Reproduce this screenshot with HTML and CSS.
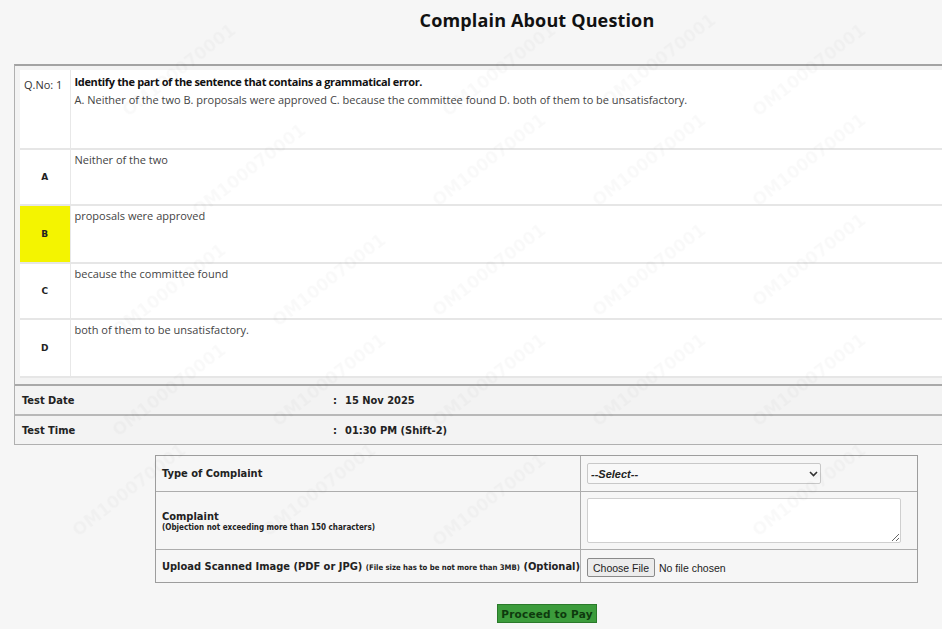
FILE: index.html
```html
<!DOCTYPE html>
<html lang="en">
<head>
<meta charset="utf-8">
<title>Complain About Question</title>
<link rel="stylesheet" href="styles.css">
</head>
<body>
<div class="page">
  <h1 class="title">Complain About Question</h1>

  <div class="qbox">
    <table class="qtable">
      <tr class="qrow">
        <td class="qno">Q.No: 1</td>
        <td class="qtext">
          <div class="qhead">Identify the part of the sentence that contains a grammatical error.</div>
          <div class="qbody">A. Neither of the two B. proposals were approved C. because the committee found D. both of them to be unsatisfactory.</div>
        </td>
      </tr>
      <tr class="opt opt-a">
        <td class="lbl">A</td>
        <td class="otext">Neither of the two</td>
      </tr>
      <tr class="opt opt-b">
        <td class="lbl lbl-sel">B</td>
        <td class="otext">proposals were approved</td>
      </tr>
      <tr class="opt opt-c">
        <td class="lbl">C</td>
        <td class="otext">because the committee found</td>
      </tr>
      <tr class="opt opt-d">
        <td class="lbl">D</td>
        <td class="otext">both of them to be unsatisfactory.</td>
      </tr>
    </table>

    <div class="info">
      <div class="info-row">
        <span class="info-key">Test Date</span>
        <span class="info-colon">:</span>
        <span class="info-val">15 Nov 2025</span>
      </div>
      <div class="info-row">
        <span class="info-key">Test Time</span>
        <span class="info-colon">:</span>
        <span class="info-val">01:30 PM (Shift-2)</span>
      </div>
    </div>
  </div>

  <table class="form">
    <tr class="frow frow-type">
      <td class="flabel">Type of Complaint</td>
      <td class="finput">
        <div class="select-wrap">
          <select class="select">
            <option>--Select--</option>
          </select>
          <svg class="chev" width="9" height="6" viewBox="0 0 9 6"><path d="M1 1 L4.5 4.5 L8 1" fill="none" stroke="#333" stroke-width="1.6"/></svg>
        </div>
      </td>
    </tr>
    <tr class="frow frow-complaint">
      <td class="flabel">Complaint<div class="fnote">(Objection not exceeding more than 150 characters)</div></td>
      <td class="finput"><textarea class="area"></textarea></td>
    </tr>
    <tr class="frow frow-upload">
      <td class="flabel">Upload Scanned Image (PDF or JPG) <span class="fsmall">(File size has to be not more than 3MB)</span> (Optional)</td>
      <td class="finput"><input class="file" type="file"></td>
    </tr>
  </table>

  <div class="actions">
    <button class="pay" type="button">Proceed to Pay</button>
  </div>

  <div class="watermarks" aria-hidden="true">
    <span class="wm" style="left:110px;top:60px">OM100070001</span>
    <span class="wm" style="left:430px;top:60px">OM100070001</span>
    <span class="wm" style="left:590px;top:50px">OM100070001</span>
    <span class="wm" style="left:740px;top:60px">OM100070001</span>
    <span class="wm" style="left:180px;top:160px">OM100070001</span>
    <span class="wm" style="left:420px;top:150px">OM100070001</span>
    <span class="wm" style="left:580px;top:150px">OM100070001</span>
    <span class="wm" style="left:740px;top:150px">OM100070001</span>
    <span class="wm" style="left:100px;top:280px">OM100070001</span>
    <span class="wm" style="left:260px;top:270px">OM100070001</span>
    <span class="wm" style="left:420px;top:260px">OM100070001</span>
    <span class="wm" style="left:580px;top:260px">OM100070001</span>
    <span class="wm" style="left:740px;top:250px">OM100070001</span>
    <span class="wm" style="left:100px;top:380px">OM100070001</span>
    <span class="wm" style="left:260px;top:370px">OM100070001</span>
    <span class="wm" style="left:420px;top:370px">OM100070001</span>
    <span class="wm" style="left:580px;top:370px">OM100070001</span>
    <span class="wm" style="left:740px;top:370px">OM100070001</span>
    <span class="wm" style="left:60px;top:480px">OM100070001</span>
    <span class="wm" style="left:250px;top:480px">OM100070001</span>
    <span class="wm" style="left:420px;top:490px">OM100070001</span>
    <span class="wm" style="left:740px;top:480px">OM100070001</span>
  </div>
</div>
</body>
</html>
```

FILE: styles.css
```css
html, body {
  margin: 0;
  padding: 0;
  overflow: hidden;
  background: #f6f6f6;
}

body {
  font-family: "Open Sans", "Liberation Sans", sans-serif;
  color: #222;
}

.page {
  position: relative;
  width: 1046px;
  margin-left: 14px;
}

.title {
  margin: 0;
  padding-top: 8px;
  height: 64px;
  box-sizing: border-box;
  text-align: center;
  font-family: "Open Sans", sans-serif;
  font-weight: 700;
  font-size: 18px;
  line-height: 24px;
  color: #111;
  letter-spacing: 0.15px;
}

/* question box */
.qbox {
  border-top: 2px solid #a3a3a3;
  border-left: 1px solid #b0b0b0;
  border-bottom: 1px solid #b0b0b0;
  background: #f3f3f3;
}

.qtable {
  width: calc(100% - 6px);
  margin-left: 5px;
  margin-top: 4px;
  border-collapse: collapse;
  background: #ffffff;
}

.qtable td {
  vertical-align: top;
  padding: 0;
}

.qrow td {
  height: 75px;
  border-bottom: 2px solid #e6e6e6;
}

.qno {
  width: 50px;
  padding: 6px 0 0 4px !important;
  font-size: 11px;
  line-height: 18px;
  color: #333;
  border-right: 1px solid #e8e8e8;
  white-space: nowrap;
  box-sizing: border-box;
}

.qtext {
  padding: 3px 0 0 4px !important;
  font-size: 11px;
  line-height: 18px;
}

.qhead {
  font-weight: 700;
  color: #111;
  letter-spacing: -0.35px;
}

.qbody {
  color: #444;
  letter-spacing: 0;
}

.opt td {
  border-bottom: 2px solid #e6e6e6;
}

.opt-a td, .opt-c td { height: 53px; }
.opt-b td, .opt-d td { height: 55px; }

.lbl {
  vertical-align: middle !important;
  text-align: center;
  font-family: "DejaVu Sans", sans-serif;
  font-weight: 700;
  font-size: 9px;
  color: #222;
  border-right: 1px solid #e8e8e8;
}

.lbl-sel {
  background: #f4f400;
}

.otext {
  padding: 1px 0 0 4px !important;
  font-size: 11px;
  line-height: 18px;
  color: #444;
  letter-spacing: 0;
}

/* test info */
.info {
  margin-top: 6px;
  border-top: 2px solid #a9a9a9;
}

.info-row {
  display: flex;
  align-items: center;
  height: 28px;
  font-family: "DejaVu Sans Condensed", "DejaVu Sans", sans-serif;
  font-stretch: condensed;
  font-weight: 700;
  font-size: 11px;
  color: #222;
}

.info-row + .info-row {
  border-top: 2px solid #b8b8b8;
}

.info-key {
  width: 311px;
  padding-left: 7px;
}

.info-colon {
  width: 12px;
}

/* form */
.form {
  width: 763px;
  margin: 10px 0 0 141px;
  border-collapse: separate;
  border-spacing: 0;
  border: 1px solid #9d9d9d;
  background: #f6f6f6;
}

.form td {
  border-bottom: 1px solid #adadad;
  padding: 0;
}

.form tr:last-child td {
  border-bottom: none;
}

.flabel {
  width: 418px;
  padding-left: 6px !important;
  border-right: 1px solid #adadad;
  font-family: "DejaVu Sans Condensed", "DejaVu Sans", sans-serif;
  font-stretch: condensed;
  font-weight: 700;
  font-size: 11px;
  color: #222;
  white-space: nowrap;
}

.finput {
  padding-left: 6px !important;
}

.frow-type td { height: 35px; }
.frow-type .finput { vertical-align: top; padding-top: 7px !important; height: 28px; }
.frow-complaint td { height: 57px; }
.frow-upload td { height: 32px; }

.fnote {
  font-size: 8px;
  line-height: 9px;
}

.fsmall {
  font-size: 7.7px;
}

.select-wrap {
  position: relative;
  width: 234px;
  height: 21px;
}

.select {
  appearance: none;
  -webkit-appearance: none;
  display: block;
  width: 234px;
  height: 21px;
  margin: 0;
  padding: 0 0 0 3px;
  border: 1px solid #c8c8c8;
  border-radius: 2px;
  background: #f8f8f8;
  font-family: "Liberation Sans", sans-serif;
  font-style: italic;
  font-weight: 700;
  font-size: 11px;
  color: #222;
}

.chev {
  position: absolute;
  right: 3px;
  top: 8px;
  pointer-events: none;
}

.area {
  display: block;
  width: 314px;
  height: 45px;
  box-sizing: border-box;
  margin: 0;
  border: 1px solid #cfcfcf;
  border-radius: 2px;
  background: #ffffff;
  resize: both;
}

.file {
  font-family: "Liberation Sans", sans-serif;
  font-size: 10.5px;
  color: #222;
}

.file::file-selector-button {
  font-family: "Liberation Sans", sans-serif;
  font-size: 10.5px;
  height: 19px;
  padding: 0 5px;
  margin-right: 4px;
  border: 1px solid #8a8a8a;
  border-radius: 2px;
  background: #ececec;
  color: #222;
}

.actions {
  display: flex;
  justify-content: center;
  padding: 21px 0 0 20px;
}

.pay {
  width: 100px;
  height: 19px;
  padding: 0;
  border: 1px solid #2a7a2a;
  background: #3c9c3c;
  font-family: "DejaVu Sans", sans-serif;
  font-weight: 700;
  font-size: 10.5px;
  color: #0e3a0e;
  letter-spacing: 0.2px;
}

/* watermark overlay */
.watermarks {
  position: absolute;
  left: -14px;
  top: 0;
  width: 956px;
  height: 629px;
  pointer-events: none;
  overflow: hidden;
}

.wm {
  position: absolute;
  transform: rotate(-38deg);
  font-family: "DejaVu Sans", sans-serif;
  font-weight: 700;
  font-size: 17px;
  color: rgba(0, 0, 0, 0.025);
  filter: blur(0.6px);
  white-space: nowrap;
}
```
